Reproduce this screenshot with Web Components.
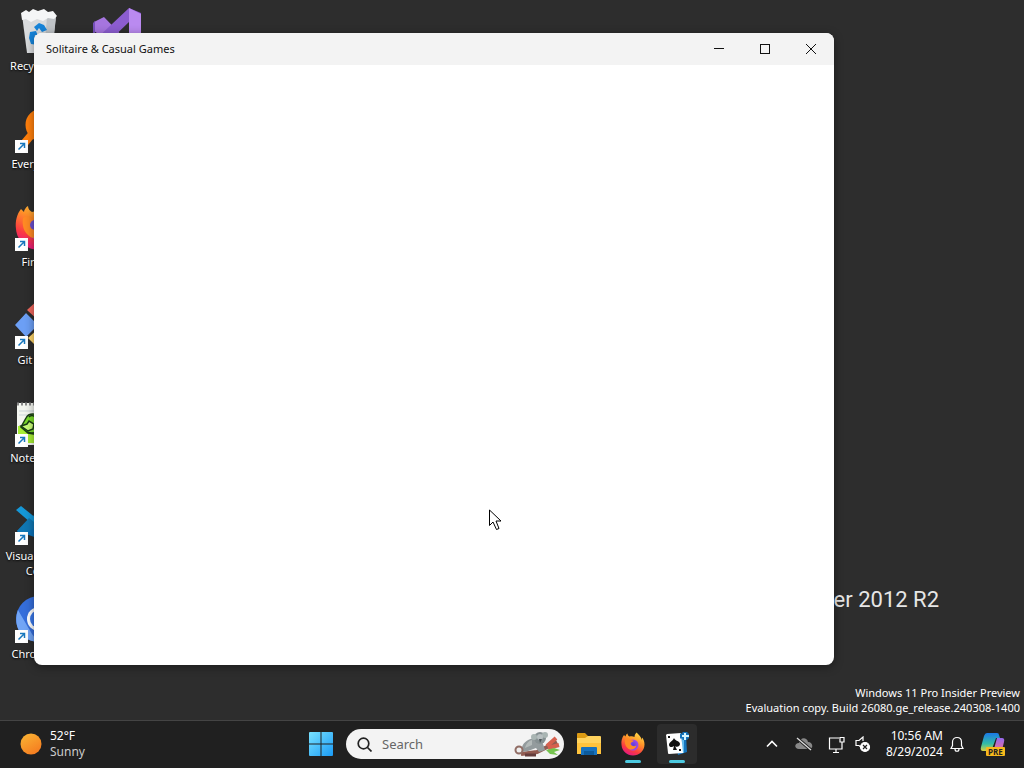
<!DOCTYPE html>
<html lang="en">
<head>
<meta charset="utf-8">
<title>Desktop</title>
<style>
html,body{margin:0;height:100%;overflow:hidden;background:#2d2d2d}
body{font:12px/16px "Noto Sans","Open Sans",sans-serif;color:#fff}
</style>
</head>
<body>
<desk-shell>
  <desk-icon kind="bin" plain>Recycle Bin</desk-icon>
  <desk-icon kind="everything">Everything</desk-icon>
  <desk-icon kind="firefox">Firefox</desk-icon>
  <desk-icon kind="git">Git Bash</desk-icon>
  <desk-icon kind="notepad">Notepad++</desk-icon>
  <desk-icon kind="code">Visual Studio Code</desk-icon>
  <desk-icon kind="chromium">Chromium</desk-icon>
  <desk-icon kind="vs" plain></desk-icon>
  <app-window slot="window">Solitaire &amp; Casual Games</app-window>
  <task-bar slot="bar"></task-bar>
</desk-shell>
<script>
const foxDefs = id => `<defs><linearGradient id="${id}a" x1=".8" y1="0" x2=".3" y2="1"><stop stop-color="#ffe14a"/><stop offset=".4" stop-color="#ff9228"/><stop offset=".75" stop-color="#fb3a42"/><stop offset="1" stop-color="#e31587"/></linearGradient><radialGradient id="${id}b"><stop stop-color="#5b3fd8"/><stop offset="1" stop-color="#a14bea"/></radialGradient></defs>`;
const fox = id => foxDefs(id) + `<path fill="url(#${id}a)" d="M31 1c-3 3-4 6-4 9-3-2-7-2-10-1-2-1-4-3-4-6-2 1-4 4-4 6L6 6C2 11 0 18 1 26c1 12 11 21 23 21s23-9 23-22c0-6-2-11-5-14v5C40 9 35 5 31 1z"/><circle cx="24" cy="26" r="11" fill="url(#${id}b)"/><path fill="#ff8a24" d="M8 15c4-3 9-2 11 1l6 1c0 3-5 3-6 6 1 5 7 7 12 4-2 8-12 11-18 5C8 28 7 20 8 15z"/>`;
const art = {
bin:`<svg viewBox="0 0 48 48"><path fill="#d9dbdd" d="M7 8h34l-4 38H12z"/><path fill="#bfc3c7" d="M32 10h9l-4 36h-8z"/><path fill="#f5f6f7" d="M6 6l5-3 3 2 4-3 5 2 6-2 4 3 5-1 4 5-3 3-6-1-5 3-6-2-6 3-5-3-4 1z"/><g fill="#1683d8"><path d="M19 20l5-4 5 2 3 5-5 2-3-4-2 3z"/><path d="M15 25l6-1 2 5-3-1-1 5 4 1v4l-7-1-2-6z"/><path d="M26 32l6-1 1-4 3 4-3 6-6 1v2l-4-4 3-5z"/></g></svg>`,
everything:`<svg viewBox="0 0 48 48"><circle cx="27" cy="20" r="12" fill="none" stroke="#ff7f0c" stroke-width="9"/><path d="M18 28L7 41" stroke="#ff7f0c" stroke-width="8"/></svg>`,
firefox:`<svg viewBox="0 0 48 48"><g>${fox("d")}</g><circle cx="20" cy="22" r="5" fill="#6a4fd0"/></svg>`,
git:`<svg viewBox="0 0 48 48"><path fill="#f0685e" d="M24-2l11 11-11 11-12-11z"/><path fill="#6c9ff5" stroke="#2d2d2d" stroke-width="1.500" d="M11 11l13 13-13 13L-1 24z"/><path fill="#ffd66c" d="M24 27l11 10-11 11-11-11z"/><path fill="#7cc36a" d="M37 13l11 12-11 12-11-12z"/></svg>`,
notepad:`<svg viewBox="0 0 48 48"><path fill="#f4f6f0" d="M2 4h40v42H2z"/><path stroke="#888" stroke-width="3" stroke-dasharray="2 2" d="M2 5h40"/><path stroke="#ccd5d8" d="M4 12h38M4 16h38"/><path fill="#a6ee35" d="M3 27h39v17H3z"/><g stroke="#193d15" stroke-width="1.500"><path fill="#7bdc2b" d="M11 19c3-6 14-5 16 2l-3 15-11-2-7-6z"/><path fill="#caff79" d="M6 27l6-2 2-3 5 3-1 5-5 2z"/><path fill="none" d="M14 18q3-3 6 0M12 33q5 2 10 0"/></g></svg>`,
code:`<svg viewBox="0 0 48 48"><path fill="#0b72b9" d="M2 34L34 4l12 6v28l-12 7z"/><path fill="#1598d8" d="M1 13l5-4 31 25v10z"/><path fill="#1077b4" d="M2 34L14 21l10 8-18 9z"/></svg>`,
chromium:`<svg viewBox="0 0 48 48"><circle cx="24" cy="24" r="23" fill="#356edb"/><path fill="#72a5f5" d="M3 15l14 24 6 8C7 46-3 32 3 15z"/><circle cx="24" cy="24" r="12" fill="#fff"/><circle cx="24" cy="24" r="9" fill="#3977e9"/></svg>`,
vs:`<svg viewBox="0 0 48 48"><path fill="#a675df" d="M1 15l10-5 25 26-7 8L1 24z"/><path fill="#7650bb" d="M0 16l2-2v26l-2-2z"/><path fill="#8c5dd0" d="M1 34L36 1l12 5v34H36V15L8 42z"/><path fill="#ba8af0" d="M36 1l12 6v33H36z"/></svg>`
};
class Part extends HTMLElement {
  paint(markup){ this.attachShadow({mode:"open"}).innerHTML = markup; }
}
class DeskShell extends Part {
  connectedCallback(){ this.paint(`<style>
  :host{display:flex;flex-direction:column;height:100vh;position:relative;background:#2d2d2d;overflow:hidden}
  main{flex:1;min-height:0;display:grid;grid-template-rows:repeat(7,98px);grid-auto-flow:column;grid-auto-columns:78px;padding-top:7px;box-sizing:border-box}
  .brand{position:absolute;right:85px;bottom:152px;font:400 22px/32px Roboto,"Open Sans",sans-serif;color:#e6e6e6;white-space:nowrap}
  .mark{position:absolute;right:4px;bottom:53px;text-align:right;font-size:11px;line-height:15px;white-space:nowrap}
  .mark p{margin:0}
  </style><main><slot></slot></main>
  <div class="brand">Windows Server 2012 R2</div>
  <div class="mark"><p>Windows 11 Pro Insider Preview</p><p>Evaluation copy. Build 26080.ge_release.240308-1400</p></div>
  <slot name="window"></slot><slot name="bar"></slot>
  <mouse-pointer></mouse-pointer>`); }
}
class MousePointer extends Part {
  connectedCallback(){ this.paint(`<style>:host{position:absolute;left:489px;top:509px;width:13px;height:22px;pointer-events:none}svg{display:block}</style>
  <svg width="13" height="22"><path d="M.5 1v15.500l3.500-3.500 3.500 7.500 2.500-1-3-7.500h5z" fill="#fff" stroke="#000"/></svg>`); }
}
class DeskIcon extends Part {
  connectedCallback(){ const k=this.getAttribute("kind"); this.paint(`<style>
  :host{display:flex;flex-direction:column;align-items:center;min-width:0;text-align:center}
  .pic{position:relative;width:48px;height:48px;flex:none}
  .pic>svg{display:block;width:48px;height:48px}
  .pic>.link{position:absolute;left:0;bottom:0;width:13px;height:13px}
  .name{margin-top:3px;font-size:11px;line-height:15px;width:70px;text-shadow:0 1px 2px #000}
  </style><div class="pic">${art[k]}${this.hasAttribute("plain")?"":`<svg class="link" viewBox="0 0 13 13"><path fill="#fff" d="M0 0h13v13H0z"/><path d="M3.500 9.500l5.500-5.500M5 3.500h4.500V8" fill="none" stroke="#1877bd" stroke-width="1.500"/></svg>`}</div><div class="name"><slot></slot></div>`); }
}
class AppWindow extends Part {
  connectedCallback(){ this.paint(`<style>
  :host{position:absolute;left:34px;top:33px;width:800px;height:632px;background:#fff;border-radius:8px;overflow:hidden;box-shadow:0 2px 10px #0006;color:#111}
  header{display:flex;align-items:stretch;height:32px;background:#f3f3f3}
  .title{flex:1;padding-left:12px;font-size:11px;line-height:32px}
  button{width:46px;border:0;padding:0;background:none;display:grid;place-items:center}
  svg{fill:none;stroke:#111}
  </style><header><div class="title"><slot></slot></div>
  <button aria-label="Minimize"><svg width="10" height="10"><path d="M0 4.500h10"/></svg></button>
  <button aria-label="Maximize"><svg width="10" height="10"><rect x=".5" y=".5" width="9" height="9"/></svg></button>
  <button aria-label="Close"><svg width="10" height="10"><path d="M0 0l10 10M10 0l-10 10"/></svg></button></header>`); }
}
class TaskBar extends Part {
  connectedCallback(){ this.paint(`<style>
  :host{display:grid;grid-template-columns:1fr auto 1fr;height:47px;box-sizing:content-box;background:#202020;border-top:1px solid #444;flex:none;position:relative}
  button{border:0;padding:0;background:none;color:inherit;font:inherit;display:grid;place-items:center}
  svg{display:block}
  .weather,.mid,.tray{height:46px}
  .weather{display:flex;align-items:center;justify-self:start;gap:8px;padding-left:20px;text-align:left}
  .weather small{display:block;font-size:12px;color:#ccc}
  .mid{display:flex;align-items:center;gap:4px;padding-right:26px}
  .app{width:40px;height:40px;border-radius:4px;position:relative}
  .app.on{background:#2c2c2c}
  .app i{position:absolute;bottom:1px;left:12px;width:16px;height:3px;border-radius:2px;background:#4cc9e0}
  .search{display:flex;align-items:center;width:218px;height:30px;border-radius:15px;background:#f3f3f3;margin:0 1px;box-sizing:border-box;padding:0 3px 0 11px;gap:10px}
  input{flex:1;min-width:0;border:0;padding:0;background:none;outline:0;font:13px/18px "Noto Sans",sans-serif;color:#111}
  input::placeholder{color:#666;opacity:1}
  .tray{display:flex;align-items:center;justify-self:end;padding-right:18px}
  .tray button{height:40px}
  .clock{width:56px;margin:0 8px 0 12px;text-align:right;justify-items:end}
  .stroke{fill:none;stroke:#fff;stroke-width:1.200}
  </style>
  <button class="weather"><svg width="22" height="22"><defs><linearGradient id="s" x1=".2" y1="0" x2=".8" y2="1"><stop stop-color="#f9b233"/><stop offset="1" stop-color="#f5791f"/></linearGradient></defs><circle cx="11" cy="11" r="10.500" fill="url(#s)"/></svg><span>52°F<small>Sunny</small></span></button>
  <div class="mid">
  <button class="app" aria-label="Start"><svg width="24" height="24"><defs><linearGradient id="w" x1="0" y1="0" x2="1" y2="1" gradientUnits="objectBoundingBox"><stop stop-color="#79e2ff"/><stop offset="1" stop-color="#1a9af5"/></linearGradient></defs><path fill="url(#w)" d="M1 0h10.500v11.500H0V1q0-1 1-1zM12.500 0H23q1 0 1 1v10.500H12.500zM0 12.500h11.500V24H1q-1 0-1-1zM12.500 12.500H24V23q0 1-1 1H12.500z"/></svg></button>
  <label class="search"><svg width="15" height="15" fill="none" stroke="#222" stroke-width="1.700"><circle cx="6.500" cy="6.500" r="5.300"/><path d="M10.500 10.500l4 4"/></svg><input type="text" placeholder="Search" aria-label="Search">
  <svg width="48" height="28" viewBox="0 0 48 28"><path d="M8 24l16-2 20-10" stroke="#925b51" stroke-width="4" fill="none"/><path d="M34 16l9-8M35 18l11-3" stroke="#d6604e" stroke-width="4"/><path d="M33 20l8-2 6 2-6 2 4 3-8-1z" fill="#75c34e"/><path d="M9 17c3-8 13-11 20-6l3 9-6 2-3-4-8 3-6 1z" fill="#939b9d"/><path d="M19 10c-4 1-6 4-7 8l7-3z" fill="#b3bab9"/><circle cx="27" cy="8" r="6" fill="#869092"/><circle cx="21" cy="7" r="3" fill="#a9b5b3"/><circle cx="32" cy="5" r="3" fill="#a9b5b3"/><circle cx="27" cy="7" r="3" fill="#b7bfc0"/><path d="M26 9h3l-2 4z" fill="#4c5558"/><circle cx="6" cy="20" r="3.500" fill="#eee" stroke="#916d65" stroke-width="2"/><path d="M12 25h11" stroke="#643d3c" stroke-width="3"/></svg></label>
  <button class="app" aria-label="File Explorer"><svg width="26" height="24"><path fill="#dc9b13" d="M1 2q0-1 1-1h7l3 3h12v6H1z"/><path fill="#ffd35e" d="M1 6h8l3-2h12q1 0 1 1v17H1z"/><path fill="#ffc33d" d="M1 11h24v11H1z"/><path fill="#1772bf" d="M5 23v-7q0-1 1-1h14q1 0 1 1v7z"/><path fill="#0d5b9c" d="M8 19h10v4H8z"/></svg></button>
  <button class="app" aria-label="Firefox"><svg width="24" height="24" viewBox="0 0 48 48">${fox("t")}</svg><i></i></button>
  <button class="app on" aria-label="Solitaire"><svg width="24" height="24"><path fill="#1575bd" d="M9 2l12 1 1 17-9 3z"/><path stroke="#79d2ff" stroke-width="1.500" d="M18 5v16"/><path fill="#fff" d="M2 2l14-1 2 20-14 1q-1 0-1-1L1 3z"/><path fill="#111" d="M9 6c-1 3-5 4-5 7 0 2 3 3 5 1l-1 4h4l-2-4c2 2 5 0 5-2 0-3-5-3-6-6zM3 4h2v2H3zM14 17h2v2h-2z"/><path stroke="#1575bd" stroke-width="5" d="M20 0v8M15 4h9"/><path stroke="#d7f5ff" stroke-width="2" d="M20 1v7M17 4h7"/></svg><i></i></button>
  </div>
  <div class="tray">
  <button aria-label="Show hidden icons" style="width:32px"><svg class="stroke" width="12" height="8"><path stroke-width="1.600" d="M1 6.500l5-5 5 5"/></svg></button>
  <button aria-label="OneDrive" style="width:32px"><svg width="18" height="16"><path fill="#888" d="M4 13c-5 0-5-6 0-6 1-6 8-6 9-1 5 0 6 7 1 7z"/><path stroke="#202020" stroke-width="3" d="M2 2l14 12"/><path stroke="#ddd" stroke-width="1.300" d="M2 2l14 12"/></svg></button>
  <button aria-label="Network" style="width:28px;margin-left:2px"><svg class="stroke" width="17" height="17"><path d="M11 2H1.500v11H14V8M5 16.500h6M8 13v3M12 1.500h4V6h-4zM14 6v5"/></svg></button>
  <button aria-label="Volume muted" style="width:24px"><svg class="stroke" width="17" height="17"><path d="M8 12L5 9.500H2v-5h3L9 1v4"/><circle cx="11" cy="11" r="4.500" fill="#fff"/><path stroke="#202020" d="M9 9l4 4M13 9l-4 4"/></svg></button>
  <button class="clock"><span>10:56 AM<br>8/29/2024</span></button>
  <button aria-label="Notifications"><svg class="stroke" width="14" height="16"><path d="M1 12.500l1.500-3V6c0-6 9-6 9 0v3.500l1.500 3zM5 13c0 3 4 3 4 0"/></svg></button>
  <button aria-label="Copilot preview" style="margin-left:16px"><svg width="26" height="25"><defs><linearGradient id="c" x1="0" y1="0" x2="0" y2="1"><stop stop-color="#1a79e8"/><stop offset=".6" stop-color="#34bca5"/><stop offset="1" stop-color="#d7d13e"/></linearGradient><linearGradient id="k" x1="0" y1="0" x2="0" y2="1"><stop stop-color="#9368ed"/><stop offset="1" stop-color="#fb7187"/></linearGradient></defs><path fill="url(#c)" d="M7 1h10q2 0 2 2l1 3h-4l-4 11q-1 2-4 2H3q-3 0-2-4L4 4q1-3 3-3z"/><path fill="url(#k)" d="M17 6h5q3 0 2 4l-2 8q-1 3-4 3h-8q3 0 4-4z"/><rect x="6" y="15" width="19" height="9" rx="1" fill="#f7b91c"/><text x="8" y="23" font-family="Open Sans,sans-serif" font-size="8" font-weight="700" fill="#222">PRE</text></svg></button>
  </div>`); }
}
customElements.define("desk-icon",DeskIcon);
customElements.define("app-window",AppWindow);
customElements.define("task-bar",TaskBar);
customElements.define("mouse-pointer",MousePointer);
customElements.define("desk-shell",DeskShell);
</script>
</body>
</html>
